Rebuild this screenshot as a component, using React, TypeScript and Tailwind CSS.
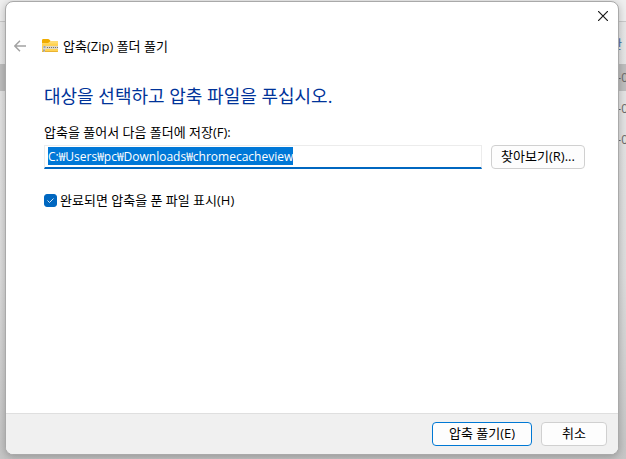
import { useEffect, useRef, useState } from "react";

const rows = [
  { date: "-0", selected: true },
  { date: "-0", selected: false },
  { date: "-0", selected: false },
];

function ExplorerBackdrop() {
  return (
    <div aria-hidden="true" className="absolute inset-0 overflow-hidden bg-linear-to-b from-[#e9e9e9] via-[#dedede] via-60% to-[#c6c6c6] text-right">
      <div className="h-[22px] border-b border-[#cbcbcb] bg-[#efefef]" />
      <div className="mt-3 h-[22px] pr-1 text-[12px] leading-[22px] text-[#3b6fa8]">
        <span>간</span>
      </div>
      <div className="mt-2">
        {rows.map((row, i) => (
          <div
            key={i}
            className={`mb-1 h-[27px] text-[12px] leading-[27px] text-[#6b6b6b] ${row.selected ? "bg-[#bfbfbf]" : ""}`}
          >
            <span className="-mr-[2px]">{row.date}</span>
          </div>
        ))}
      </div>
    </div>
  );
}

function ZipFolderIcon() {
  return (
    <svg viewBox="0 0 16 14" className="h-[14px] w-4 shrink-0" aria-hidden="true">
      <path d="M0 4V1.4C0 .6.5 0 1.4 0h4.7c.5 0 .8.2 1.1.5L8.6 2 7 4z" fill="#f0ac00" />
      <path d="M0 4h6c.5 0 .9-.2 1.2-.5L8.6 2H15c.6 0 1 .4 1 1v9c0 .6-.4 1-1 1H1c-.6 0-1-.4-1-1z" fill="#ffd252" />
      <path d="M0 4h6c.5 0 .9-.2 1.2-.5L8.6 2H15c.6 0 1 .4 1 1v1.5H0z" fill="#ffdc70" />
      <path d="M0 12h16c0 .7-.4 1-1 1H1c-.6 0-1-.3-1-1z" fill="#eab331" />
      <path d="M3 7h13v3H3z" fill="#e0d8c4" />
      <path d="M3 8.5h13" stroke="#77736a" strokeDasharray="1 1" />
      <path d="M1 7h3v3.5H3V13H1.500V10.500H1z" fill="#d6d6d6" />
      <path d="M1.500 8h2M2 10.500v2" stroke="#777" />
    </svg>
  );
}

const button =
  "h-6 rounded-[4px] border bg-[#fdfdfd] pb-[2px] text-[13px] leading-[20px] text-black";

export default function App() {
  const pathRef = useRef<HTMLInputElement>(null);
  const [path, setPath] = useState("C:₩Users₩pc₩Downloads₩chromecacheview");
  const [showFiles, setShowFiles] = useState(true);

  useEffect(() => {
    pathRef.current?.focus();
    pathRef.current?.select();
  }, []);

  return (
    <div className="relative flex h-screen flex-col pt-px pr-[7px] pb-1 pl-[5px] font-['Open_Sans','Noto_Sans_CJK_KR',sans-serif] text-black">
      <ExplorerBackdrop />
      <section
        role="dialog"
        aria-labelledby="title"
        className="relative flex grow flex-col overflow-hidden rounded-lg border border-[#a9a9a9] bg-white shadow-[0_2px_8px_rgba(0,0,0,0.25)]"
      >
        <div className="flex h-7 justify-end">
          <button type="button" aria-label="닫기" className="flex w-[30px] items-center justify-center">
            <svg viewBox="0 0 10 10" className="size-[10px]">
              <path d="M0 0l10 10M10 0L0 10" stroke="#1a1a1a" strokeWidth="1.2" />
            </svg>
          </button>
        </div>
        <header className="flex h-8 items-center pl-2">
          <button type="button" aria-label="뒤로" className="mr-4 text-[#a3a3a3]">
            <svg viewBox="0 0 12 12" className="size-3" fill="none" stroke="currentColor" strokeWidth="1.5">
              <path d="M12 6H1M6 .8L.8 6 6 11.2" />
            </svg>
          </button>
          <ZipFolderIcon />
          <h1 id="title" className="ml-[5px] text-[13px] leading-4">압축(Zip) 폴더 풀기</h1>
        </header>
        <main className="flex grow flex-col pt-[22px] pr-[33px] pl-[38px]">
          <h2 className="text-[18px] leading-6 text-[#003399]">대상을 선택하고 압축 파일을 푸십시오.</h2>
          <label htmlFor="path" className="mt-4 text-[13px] leading-4">압축을 풀어서 다음 폴더에 저장(F):</label>
          <div className="mt-[5px] flex items-center gap-[9px]">
            <input
              id="path"
              ref={pathRef}
              value={path}
              onChange={(e) => setPath(e.target.value)}
              className="h-6 min-w-0 grow border border-b-2 border-[#ececec] border-b-[#0067c0] bg-white px-[3px] pb-[2px] text-[12px] leading-4 outline-none selection:bg-[#0078d7] selection:text-white"
            />
            <button type="button" className={`${button} w-[94px] border-[#d0d0d0]`}>찾아보기(R)...</button>
          </div>
          <label className="mt-[23px] flex items-center gap-[3px] self-start text-[13px] leading-4">
            <span className="grid size-[13px] place-items-center">
              <input
                type="checkbox"
                checked={showFiles}
                onChange={(e) => setShowFiles(e.target.checked)}
                className="peer col-start-1 row-start-1 size-[13px] appearance-none rounded-[3px] border border-[#0067c0] checked:bg-[#0067c0]"
              />
              <svg viewBox="0 0 13 13" className="pointer-events-none z-10 col-start-1 row-start-1 hidden size-[13px] peer-checked:block" fill="none" stroke="#d5e6f5">
                <path d="M3.5 6.5l2 2 4-4" />
              </svg>
            </span>
            완료되면 압축을 푼 파일 표시(H)
          </label>
        </main>
        <footer className="flex h-[41px] shrink-0 items-center justify-end gap-[9px] border-t border-[#dfdfdf] bg-[#f0f0f0] pr-[11px]">
          <button type="button" className={`${button} w-[100px] border-[#0078d4]`}>압축 풀기(E)</button>
          <button type="button" className={`${button} w-[66px] border-[#d0d0d0]`}>취소</button>
        </footer>
      </section>
    </div>
  );
}
